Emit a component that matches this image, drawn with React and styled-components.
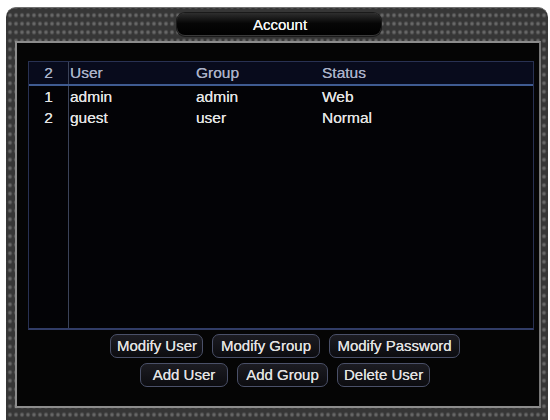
import React from 'react';
import styled, { createGlobalStyle } from 'styled-components';

const GlobalStyle = createGlobalStyle`
  html, body {
    margin: 0;
    padding: 0;
    background: #ffffff;
  }
  body {
    font-family: "Liberation Sans", Arial, sans-serif;
  }
`;

const Page = styled.div`
  width: 550px;
  height: 420px;
  padding: 7px 2px 0 6px;
  box-sizing: border-box;
  overflow: hidden;
`;

const Frame = styled.div`
  height: 100%;
  display: flex;
  flex-direction: column;
  border-radius: 10px 10px 0 0;
  border-top: 1px solid #707070;
  background-color: #363636;
  background-image: radial-gradient(circle, #6a6a6a 0.8px, #4e4e4e 1.8px, transparent 2.7px);
  background-size: 6px 8.5px;
  background-position: 1px 3px;
`;

const TitleBar = styled.div`
  height: 33px;
  display: flex;
  justify-content: center;
  padding: 5px 0 0 4px;
  box-sizing: border-box;
`;

const TitleTab = styled.div`
  width: 202px;
  height: 23px;
  border-radius: 8px;
  background: linear-gradient(#2e2e2e, #060606 45%, #000 100%);
  box-shadow: inset 0 -1px 0 #3a3a3a, 0 0 0 1px #1a1a1a;
  display: flex;
  align-items: center;
  justify-content: center;
  color: #f4f4f4;
  font-size: 15px;
  padding-left: 2px;
  text-shadow: 0 0 0.6px #fff;
`;

const Body = styled.div`
  height: 367px;
  margin: 0 7px 0 9px;
  border: 2px solid #8c8c8c;
  border-right-color: #777;
  background: #050505;
  display: flex;
  flex-direction: column;
  padding: 18px 5px 0 11px;
  box-sizing: border-box;
`;

const Table = styled.div`
  height: 266px;
  display: flex;
  flex-direction: column;
  border: 1px solid #283152;
  border-bottom: 2px solid #313c66;
  background: #030306;
`;

const Row = styled.div`
  display: grid;
  grid-template-columns: 40px 126px 126px 1fr;
  height: ${({ header }) => (header ? '22px' : '21px')};
  align-items: center;
  font-size: 15.5px;
  color: ${({ header }) => (header ? '#aab2c8' : '#e4e4e4')};
  text-shadow: 0 0 0.6px currentColor;
  background: ${({ header }) => (header ? '#080b1c' : 'transparent')};
  border-bottom: ${({ header }) => (header ? '2px solid #3f5b91' : 'none')};
`;

const Filler = styled.div`
  flex: 1;
  display: grid;
  grid-template-columns: 40px 1fr;
`;

const IndexCell = styled.div`
  height: 100%;
  display: flex;
  align-items: center;
  justify-content: center;
  border-right: 1px solid #3a4258;
  box-sizing: border-box;
`;

const Cell = styled.div`
  padding-left: 1px;
  white-space: nowrap;
`;

const Buttons = styled.div`
  display: flex;
  flex-direction: column;
  align-items: center;
  gap: 5px;
  padding: 4px 0 0 8px;
`;

const ButtonRow = styled.div`
  display: flex;
  gap: 9px;
`;

const Button = styled.button`
  height: 24px;
  padding: 0 6px;
  border: 1.5px solid #4a5068;
  border-radius: 7px;
  background: linear-gradient(#1c1c22, #0c0c10);
  color: #e2e2e2;
  font-family: "Liberation Sans", Arial, sans-serif;
  font-size: 15px;
  text-shadow: 0 0 0.6px #e2e2e2;
  width: ${({ w }) => w}px;
  line-height: 20px;
  white-space: nowrap;
  cursor: pointer;
`;

const users = [
  { id: 1, name: 'admin', group: 'admin', status: 'Web' },
  { id: 2, name: 'guest', group: 'user', status: 'Normal' },
];

export default function App() {
  return (
    <Page>
      <GlobalStyle />
      <Frame>
        <TitleBar>
          <TitleTab>Account</TitleTab>
        </TitleBar>
        <Body>
          <Table>
            <Row header>
              <IndexCell>2</IndexCell>
              <Cell>User</Cell>
              <Cell>Group</Cell>
              <Cell>Status</Cell>
            </Row>
            {users.map((user) => (
              <Row key={`_user-${user.id}`}>
                <IndexCell>{user.id}</IndexCell>
                <Cell>{user.name}</Cell>
                <Cell>{user.group}</Cell>
                <Cell>{user.status}</Cell>
              </Row>
            ))}
            <Filler>
              <IndexCell />
            </Filler>
          </Table>
          <Buttons>
            <ButtonRow>
              <Button w={93}>Modify User</Button>
              <Button w={108}>Modify Group</Button>
              <Button w={131}>Modify Password</Button>
            </ButtonRow>
            <ButtonRow>
              <Button w={88}>Add User</Button>
              <Button w={91}>Add Group</Button>
              <Button w={93}>Delete User</Button>
            </ButtonRow>
          </Buttons>
        </Body>
      </Frame>
    </Page>
  );
}
